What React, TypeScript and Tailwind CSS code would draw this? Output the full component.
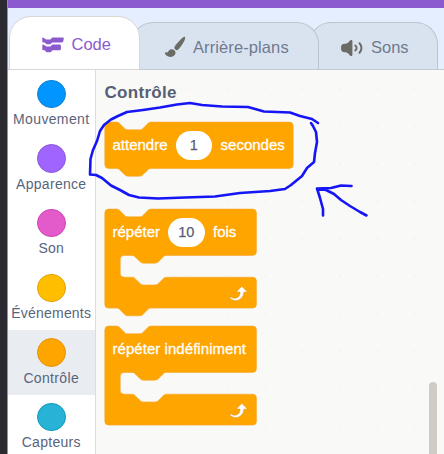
import type { ReactNode } from "react";

const FONT = "font-['Liberation_Sans',Arial,sans-serif]";

const NOTCH = "c2 0 3 1 4 2l4 4c1 1 2 2 4 2h12c2 0 3-1 4-2l4-4c1-1 2-2 4-2";
const NOTCH_BACK = "c-2 0-3 1-4 2l-4 4c-1 1-2 2-4 2h-12c-2 0-3-1-4-2l-4-4c-1-1-2-2-4-2";

const STACK = `M0 4A4 4 0 0 1 4 0H12${NOTCH}H191a4 4 0 0 1 4 4V44a4 4 0 0 1-4 4H48${NOTCH_BACK}H4a4 4 0 0 1-4-4z`;

function mouth(foot: boolean) {
  return `M0 4A4 4 0 0 1 4 0H12${NOTCH}H153a4 4 0 0 1 4 4V44a4 4 0 0 1-4 4H64${NOTCH_BACK}H20a4 4 0 0 0-4 4V66.5a4 4 0 0 0 4 4H28${NOTCH}H153a4 4 0 0 1 4 4V98.5a4 4 0 0 1-4 4H48${foot ? NOTCH_BACK : ""}H4a4 4 0 0 1-4-4z`;
}

const LOOP =
  "M21.8,11h-2.6c0,1.5-0.3,2.9-1,4.2c-0.8,1.6-2.1,2.8-3.7,3.6c-1.5,0.8-3.3,1.1-4.9,0.8c-1.6-0.2-3.2-1-4.4-2.1c-0.4-0.3-0.4-0.9-0.1-1.2c0.3-0.4,0.9-0.4,1.2-0.1c1,0.7,2.2,1.1,3.4,1.1s2.3-0.3,3.3-1c0.9-0.6,1.6-1.5,2-2.6c0.3-0.9,0.4-1.8,0.2-2.8h-2.4c-0.4,0-0.7-0.3-0.7-0.7c0-0.2,0.1-0.3,0.2-0.4l4.4-4.4c0.3-0.3,0.7-0.3,0.9,0L22,9.8c0.3,0.3,0.4,0.6,0.3,0.9S22,11,21.8,11z";

const categories = [
  { name: "Mouvement", dot: "bg-[#0095ff] border-[#1583d6]", text: "tracking-[0.35px]" },
  { name: "Apparence", dot: "bg-[#a065ff] border-[#8a57d8]", text: "tracking-[0.3px]" },
  { name: "Son", dot: "bg-[#e35bcb] border-[#cf45b6]", text: "tracking-[0.2px]" },
  { name: "Événements", dot: "bg-[#ffbf00] border-[#e0a008]", text: "tracking-[0.2px]" },
  { name: "Contrôle", dot: "bg-[#ffa500] border-[#e8910c]", text: "tracking-[0.35px]", active: true },
  { name: "Capteurs", dot: "bg-[#27b2d6] border-[#1799bb]", text: "tracking-[0.3px]" },
];

function Block({ path, height, loop, children }: { path: string; height: string; loop?: boolean; children: ReactNode }) {
  return (
    <div className={`grid ${height}`}>
      <svg className="col-start-1 row-start-1 overflow-visible" width="195" height="108" viewBox="0 0 195 108">
        <g transform="translate(-.2 .1) scale(.966)">
          <path d={path} fill="#ffa500" stroke="#f5a52d" strokeWidth=".6" />
          {loop && <path d={LOOP} transform="translate(124.7 75)" fill="#fff" stroke="#d98a10" strokeWidth=".5" />}
        </g>
      </svg>
      <div className="z-10 col-start-1 row-start-1 flex h-[47px] items-center pl-2 text-[15px] whitespace-nowrap text-white [-webkit-text-stroke:0.3px_white]">
        {children}
      </div>
    </div>
  );
}

function Value({ children }: { children: ReactNode }) {
  return (
    <span className="flex h-[29px] w-[36.5px] items-center justify-center rounded-full bg-white text-[14.5px] text-[#575e75] [-webkit-text-stroke:0.25px_#575e75]">
      {children}
    </span>
  );
}

export default function App() {
  return (
    <div className={`relative flex h-[454px] w-[444px] overflow-hidden bg-[#f9f9f7] ${FONT}`}>
      <div className="w-2 shrink-0 border-r border-[#8f909b] bg-[#2b2a30]" />
      <div className="flex min-w-0 flex-1 flex-col">
        <div className="h-[7.5px] shrink-0 bg-[#8b5acf]" />
        <div className="flex h-[62.5px] shrink-0 items-end border-b border-[#c5cad1] bg-[#e5eeff] pl-[0.5px] text-[16.5px] text-[#6f7a91]">
          <div className="z-30 -mb-px flex h-[54px] w-[131px] items-center rounded-t-[22px] border border-[#d9d6d3] bg-white pl-[32.5px] text-[#8b5acf]">
            <svg className="translate-y-[2px]" width="22" height="16" viewBox="0 0 22 16" fill="#8b5acf">
              <path d="M.3 1.200q0-1 .8-.8L2.600 1.500l1.600 1h4.200L10.300.600H20.700q1.200 0 1.100 1.200L21.300 4q-.3 1.300-1.500 1.400H10.300L8.300 7.300H4.600L2.600 5.600H1.300q-1 0-1-1z" />
              <path d="M.3 8.300q0-1 .8-.8L2.600 8.300l1.900 1.300h4L10.300 7.500H17.700q1.200 0 1.200 1.200v3.300q0 1.200-1.200 1.200h-7L8.500 15.200H4.700L2.600 13.200H1.300q-1 0-1-1z" />
            </svg>
            <span className="ml-[7.5px] translate-y-px">Code</span>
          </div>
          <div className="z-20 -ml-[9px] flex h-[47px] w-[188px] items-center rounded-t-[22px] border border-b-0 border-[#bcc5ce] bg-[#d9e3ef] pl-[32px]">
            <svg className="translate-y-px" width="22" height="22" viewBox="0 0 22 22" fill="#6b6b66">
              <path d="M20.800.8c.8.600.3 2.300-.5 4-1.700 3.500-4.700 7.800-6.700 9.200-.8.500-1.700.1-2.500-.8-.7-.8-1-1.600-.5-2.500C12 8.300 15.700 4 18.800 1.500c.8-.6 1.500-1 2-.7z" />
              <path d="M9.700 13.700c1.800 1 2.600 3.200 1 5.200-2.200 2.900-7 2.500-9.200-.5-.6-.8-.7-1.700-.2-2 .7-.3 1.500.4 2.300-.2.9-.700 1-1.700 2.300-2.500 1.300-.7 2.600-.6 3.800 0z" />
            </svg>
            <span className="ml-[7.5px] translate-y-px tracking-[0.1px]">Arrière-plans</span>
          </div>
          <div className="z-10 -ml-[9.500px] flex h-[47px] w-[128.500px] items-center rounded-t-[22px] border border-b-0 border-[#bcc5ce] bg-[#d9e3ef] pl-[30.500px]">
            <svg className="translate-y-[2px]" width="22" height="18" viewBox="0 0 22 18" fill="#6b6b66">
              <path d="M0 9c0-3 1-4.300 4-4.300 2.500 0 3.500-1.500 5-3.200 1-1 2.400-.7 2.400.5v14c0 1.200-1.400 1.500-2.400.5-1.500-1.700-2.500-3.200-5-3.200-3 0-4-1.300-4-4.300z" />
              <path d="M14.300 6.500c1.700 1.300 1.700 3.700 0 5M18.500 4.300c2.600 2.600 2.600 6.800 0 9.400" fill="none" stroke="#6b6b66" strokeWidth="2" strokeLinecap="round" />
            </svg>
            <span className="ml-[8.500px] translate-y-px">Sons</span>
          </div>
        </div>
        <div className="flex min-h-0 flex-1">
          <nav className="flex w-[87.5px] shrink-0 flex-col border-r border-[#dfdbd8] bg-white pt-[1.5px]">
            {categories.map((c) => (
              <div key={c.name} className={`flex h-[64.700px] shrink-0 flex-col items-center pt-[8px] ${c.active ? "bg-[#e9edf1]" : ""}`}>
                <span className={`size-[28.500px] rounded-full border ${c.dot}`} />
                <span className={`mt-[3px] text-[14px] leading-[17px] text-[#59647c] ${c.text}`}>{c.name}</span>
              </div>
            ))}
          </nav>
          <main className="flex min-w-0 flex-1 flex-col bg-[#f9f9f7] bg-[radial-gradient(#f3f3f1_1px,transparent_1px)] bg-size-[37.500px_37.500px] pl-[9px]">
            <h2 className="mt-[12px] h-[40px] text-[17px] leading-[22px] font-bold tracking-[0.3px] text-[#575e75]">Contrôle</h2>
            <Block path={STACK} height="h-[87px]">
              <span>attendre</span>
              <span className="mr-[8.5px] ml-[8px]"><Value>1</Value></span>
              <span>secondes</span>
            </Block>
            <Block path={mouth(true)} height="h-[117px]" loop>
              <span>répéter</span>
              <span className="mr-[8.5px] ml-[8px]"><Value>10</Value></span>
              <span>fois</span>
            </Block>
            <Block path={mouth(false)} height="h-[108px]" loop>
              <span className="tracking-[0.05px]">répéter indéfiniment</span>
            </Block>
          </main>
          <div className="mt-[312px] mr-[7.5px] w-[8px] shrink-0 rounded-t-full bg-[#cfccc7]" />
        </div>
      </div>
      <svg className="pointer-events-none absolute inset-0 z-40" width="444" height="454" fill="none" stroke="#1515f5" strokeWidth="2.600" strokeLinecap="round" strokeLinejoin="round">
        <path d="M318 123L312 119L300 116L290 112.500L264 111.500L248 107L222 106.500L202 105L190 103L177 104.500L160 107.500L143 110L127 112L118 116L111 119.500L104 125L100 131L97 141L93 150L90.500 159L90 174.500L96 175L102 178L111 185.500L120 190L129 195L139 197.500L158 198.500L185 197.500L215 196.500L240 193L270 191L285 189L291 185L302 176L307 168L314 162L315 153L317 142L316 132L313 126L311 123" />
        <path d="M366.500 215.500L360 212L350 206L341 200L334 194L326 190L317 188.500L331 188L341 185.500L351.500 186M317 188.500L320 198L323 209V215.500" />
      </svg>
    </div>
  );
}
